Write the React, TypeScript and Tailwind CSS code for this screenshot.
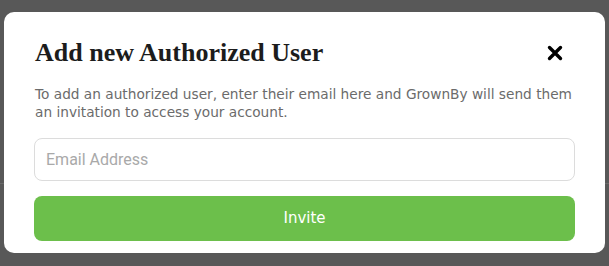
import React from 'react';

export default function App() {
  return (
    <div className="relative h-[266px] w-[609px] overflow-hidden bg-[#585858]">
      <div className="absolute left-0 right-0 top-[183px] h-px bg-[#6a6a6a]" />
      <div className="relative mx-[4px] mt-[12px] h-[241px] rounded-[10px] bg-white px-[30px] pt-[26px]">
        <div className="flex items-center justify-between pl-[1px] pr-[10px]">
          <h2 className="text-[26px] font-bold leading-[30px] text-[#1c1c1c] [font-family:'Liberation_Serif',serif]">
            Add new Authorized User
          </h2>
          <button className="flex h-[20px] w-[20px] items-center justify-center">
            <svg width="16" height="16" viewBox="0 0 16 16">
              <path d="M2.5 2.5 L13.5 13.5 M13.5 2.5 L2.5 13.5" stroke="#000" strokeWidth="3.4" strokeLinecap="round" />
            </svg>
          </button>
        </div>
        <p className="mt-[17px] pl-[1px] text-[13.7px] leading-[18px] text-[#6b6b6b] [font-family:'DejaVu_Sans',sans-serif]">
          To add an authorized user, enter their email here and GrownBy will send them an invitation to access your account.
        </p>
        <input
          placeholder="Email Address"
          className="mt-[17px] block h-[43px] w-full rounded-[8px] border border-[#dcdcdc] px-[11px] text-[16px] text-[#333] outline-none placeholder:text-[#a9a9a9] [font-family:Roboto,sans-serif]"
        />
        <button className="mt-[15px] block h-[45px] w-full rounded-[8px] bg-[#6cbf4b] text-[15px] font-medium text-white [font-family:'DejaVu_Sans',sans-serif]">
          Invite
        </button>
      </div>
    </div>
  );
}
